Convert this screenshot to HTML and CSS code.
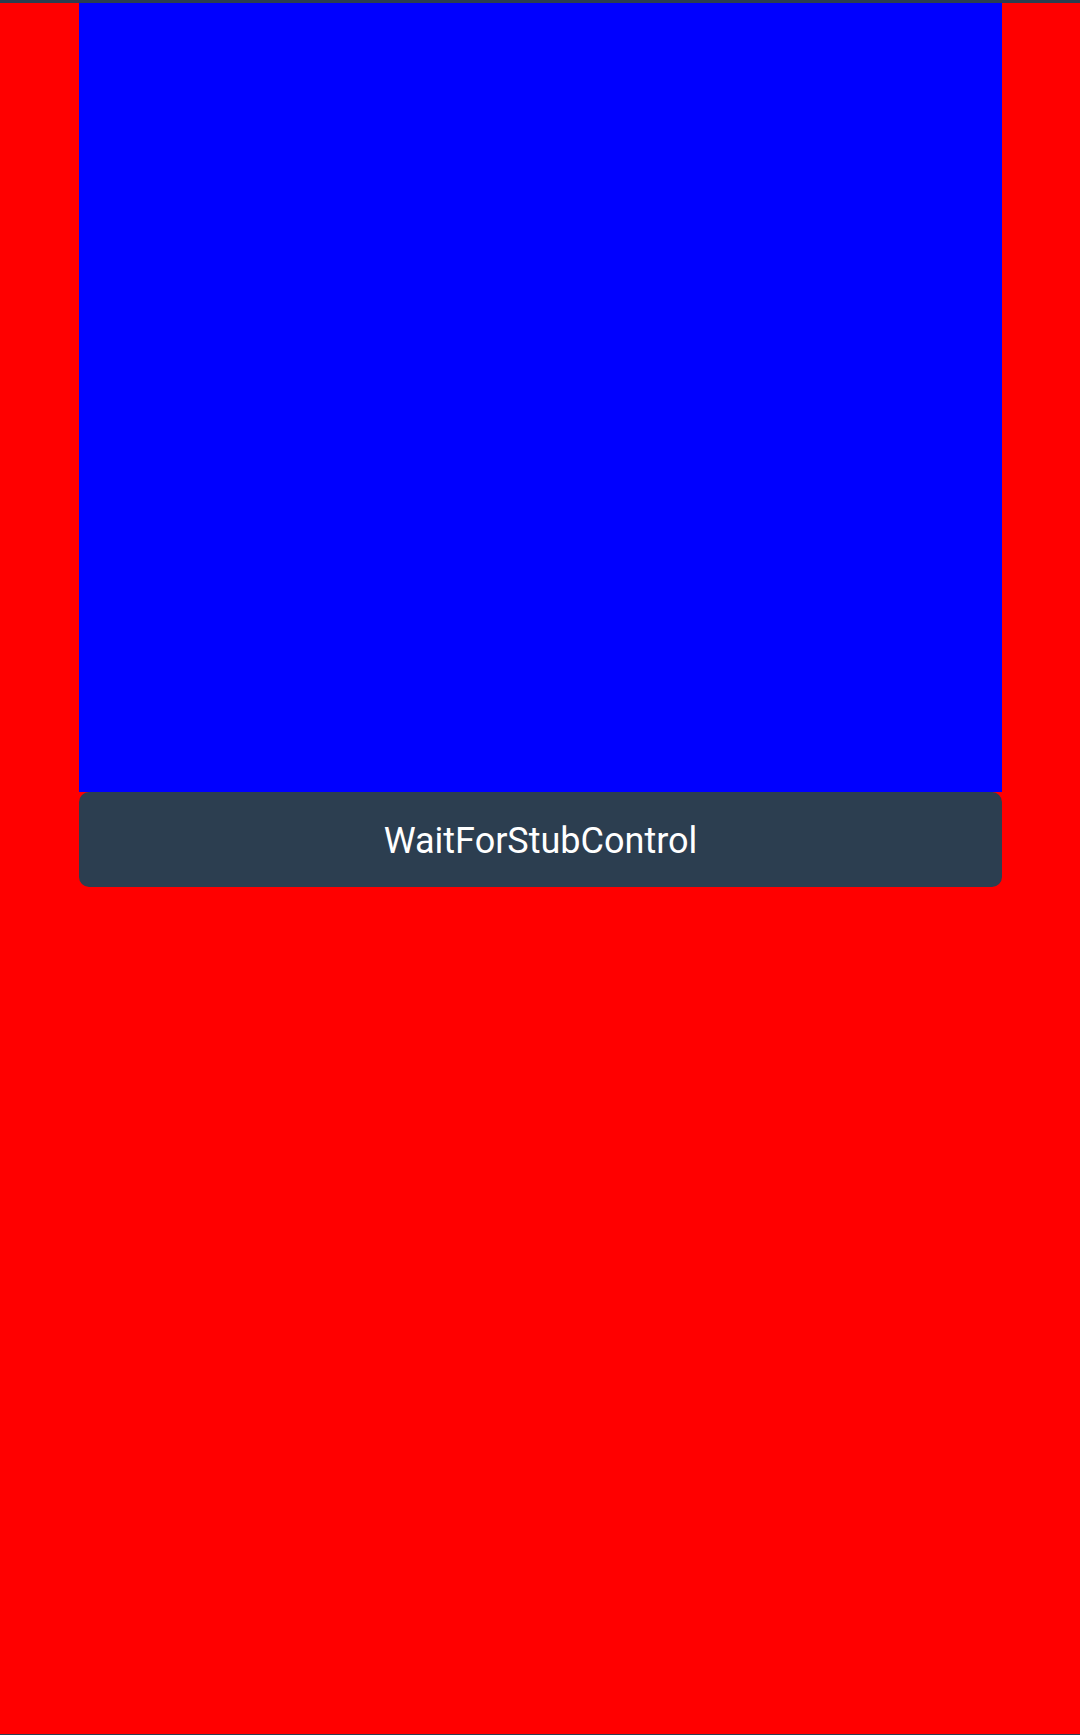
FILE: index.html
```html
<!DOCTYPE html>
<html>
<head>
<meta charset="utf-8">
<link rel="stylesheet" href="styles.css">
</head>
<body>
<div class="screen">
  <div class="content">
    <div class="stub"></div>
    <div class="label">WaitForStubControl</div>
  </div>
</div>
</body>
</html>
```
FILE: styles.css
```css
html, body {
  margin: 0;
  padding: 0;
}
body {
  background: #2c3e50;
  font-family: Roboto, "Noto Sans", sans-serif;
}
.screen {
  box-sizing: border-box;
  height: 1735px;
  border-top: 3px solid #2c3e50;
  border-bottom: 1px solid #2c3e50;
  background: #ff0000;
  padding: 0 78px 0 79px;
}
.content {
  display: flex;
  flex-direction: column;
}
.stub {
  height: 789px;
  background: #0000ff;
}
.label {
  box-sizing: border-box;
  height: 95px;
  padding-top: 3px;
  background: #2c3e50;
  border-radius: 10px;
  color: #ffffff;
  font-size: 36px;
  display: flex;
  align-items: center;
  justify-content: center;
}
```
